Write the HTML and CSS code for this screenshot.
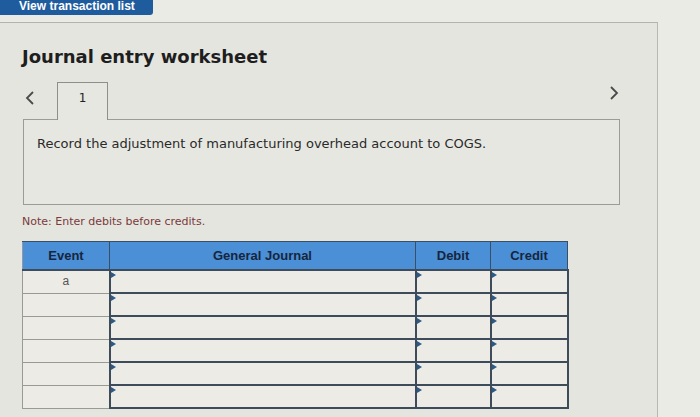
FILE: index.html
```html
<!DOCTYPE html>
<html>
<head>
<meta charset="utf-8">
<link rel="stylesheet" href="styles.css">
</head>
<body>
<div class="topbar"><div class="txbtn">View transaction list</div></div>
<div class="panel">
  <h1 class="title">Journal entry worksheet</h1>
  <div class="nav">
    <span class="arrow prev"><svg width="10" height="16" viewBox="0 0 10 16"><path d="M8 2 L2 8 L8 14" fill="none" stroke="#4a4a4a" stroke-width="1.8"/></svg></span>
    <div class="tab">1</div>
    <span class="arrow next"><svg width="10" height="16" viewBox="0 0 10 16"><path d="M2 2 L8 8 L2 14" fill="none" stroke="#4a4a4a" stroke-width="1.8"/></svg></span>
  </div>
  <div class="qbox">Record the adjustment of manufacturing overhead account to COGS.</div>
  <p class="note">Note: Enter debits before credits.</p>
  <table class="journal">
    <thead>
      <tr><th class="c-ev">Event</th><th class="c-gj">General Journal</th><th class="c-dr">Debit</th><th class="c-cr">Credit</th></tr>
    </thead>
    <tbody>
      <tr><td class="ev">a</td><td class="inp"></td><td class="inp"></td><td class="inp"></td></tr>
      <tr><td class="ev"></td><td class="inp"></td><td class="inp"></td><td class="inp"></td></tr>
      <tr><td class="ev"></td><td class="inp"></td><td class="inp"></td><td class="inp"></td></tr>
      <tr><td class="ev"></td><td class="inp"></td><td class="inp"></td><td class="inp"></td></tr>
      <tr><td class="ev"></td><td class="inp"></td><td class="inp"></td><td class="inp"></td></tr>
      <tr><td class="ev"></td><td class="inp"></td><td class="inp"></td><td class="inp"></td></tr>
    </tbody>
  </table>
</div>
</body>
</html>
```

FILE: styles.css
```css
html, body {
  margin: 0;
  padding: 0;
  background: #ebebe5;
  font-family: "DejaVu Sans", Verdana, sans-serif;
  overflow: hidden;
}
.topbar {
  height: 22px;
  overflow: hidden;
}
.txbtn {
  width: 153px;
  height: 15px;
  background: #1f5c9e;
  color: #fff;
  font-family: "Liberation Sans", Arial, sans-serif;
  font-weight: bold;
  font-size: 12px;
  line-height: 12px;
  padding-left: 19px;
  box-sizing: border-box;
  border-bottom-right-radius: 3px;
  overflow: hidden;
  white-space: nowrap;
}
.panel {
  width: 658px;
  height: 400px;
  box-sizing: border-box;
  background: #e5e5df;
  border-top: 1px solid #b3b3ad;
  border-right: 1px solid #b8b8b2;
  padding: 22px 0 0 22px;
}
.title {
  margin: 0;
  font-size: 18px;
  line-height: 24px;
  font-weight: bold;
  color: #1e1e1e;
}
.nav {
  margin-top: 13px;
  width: 598px;
  display: flex;
  align-items: flex-start;
  position: relative;
  z-index: 1;
}
.arrow {
  display: block;
  height: 16px;
}
.prev {
  margin: 8px 0 0 3px;
}
.next {
  margin: 3px 0 0 auto;
  padding-right: 1px;
}
.tab {
  margin-left: 22px;
  width: 51px;
  height: 38px;
  box-sizing: border-box;
  border: 1px solid #8f8f8a;
  border-bottom: none;
  background: #e7e7e1;
  font-size: 12px;
  color: #222;
  text-align: center;
  padding-top: 8px;
  margin-bottom: -1px;
}
.qbox {
  margin-left: 1px;
  width: 597px;
  height: 86px;
  box-sizing: border-box;
  border: 1px solid #9c9c97;
  background: #e7e7e1;
  padding: 16px 0 0 13px;
  font-size: 13px;
  line-height: 16px;
  color: #2a2a2a;
}
.note {
  margin: 10px 0 0 0;
  font-size: 11px;
  line-height: 14px;
  color: #7a3a3a;
}
.journal {
  margin-top: 12px;
  border-collapse: collapse;
  width: 541px;
  table-layout: fixed;
  font-family: "Liberation Sans", Arial, sans-serif;
}
.c-ev { width: 86px; }
.c-gj { width: 305px; }
.c-dr { width: 74px; }
.c-cr { width: 76px; }
.journal th {
  height: 27px;
  padding: 0;
  background: #4b8fd6;
  color: #16263e;
  font-size: 13px;
  font-weight: bold;
  border: 1px solid #3a4f66;
  border-bottom: 2px solid #3d4b5a;
}
.journal th.c-ev {
  border-left: 1px solid #8f9aa6;
}
.journal td {
  height: 21px;
  padding: 0;
  background: #ecebe5;
}
.journal td.ev {
  border: 1px solid #9a9a95;
  text-align: center;
  vertical-align: top;
  font-size: 12px;
  color: #555;
  padding-top: 3px;
  box-sizing: border-box;
}
.journal td.inp {
  border: 2px solid #3d4b5a;
  position: relative;
}
.journal td.inp::before {
  content: "";
  position: absolute;
  left: 0;
  top: 1px;
  border-top: 3px solid transparent;
  border-bottom: 3px solid transparent;
  border-left: 5px solid #2c5a86;
}
```
